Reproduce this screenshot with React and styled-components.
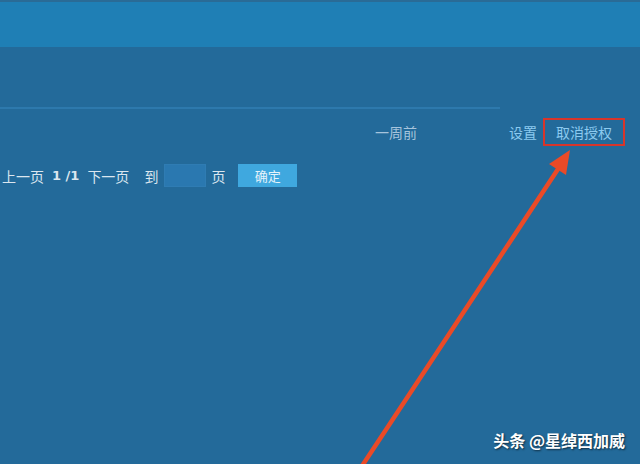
import React from 'react'
import styled, { createGlobalStyle } from 'styled-components'

const GlobalStyle = createGlobalStyle`
  html, body {
    margin: 0;
    padding: 0;
    background: #236a9a;
  }
  body {
    font-family: "Noto Sans CJK SC", "Liberation Sans", sans-serif;
  }
`

const Page = styled.div`
  position: relative;
  width: 640px;
  height: 464px;
  overflow: hidden;
  background: #236a9a;
`

const Header = styled.div`
  height: 47px;
  background: #1f7fb5;
  border-top: 2px solid #2a6b96;
  box-sizing: border-box;
`

const Content = styled.div`
  display: flex;
  flex-direction: column;
  padding-top: 60px;
`

const Divider = styled.div`
  width: 500px;
  height: 2px;
  background: #2d79ad;
`

const Row = styled.div`
  display: flex;
  align-items: center;
  height: 30px;
  margin-top: 8px;
  padding-left: 375px;
  padding-right: 15px;
`

const Time = styled.span`
  font-size: 14px;
  color: #a6c4dc;
`

const Actions = styled.div`
  display: flex;
  align-items: center;
  margin-left: auto;
  gap: 4px;
`

const Link = styled.a`
  font-size: 14px;
  color: #8ccaf0;
  text-decoration: none;
  padding: 2px ${p => (p.$boxed ? '11px' : '0')};
  border: 2px solid ${p => (p.$boxed ? '#d7352b' : 'transparent')};
  line-height: 20px;
`

const Pager = styled.div`
  display: flex;
  align-items: center;
  gap: 8px;
  margin-top: 17px;
  padding-left: 2px;
  font-size: 14px;
  color: #dbe6ef;
`

const Label = styled.span`
  margin-left: ${p => p.$shift || 0}px;
`

const Count = styled.b`
  font-family: "DejaVu Sans", sans-serif;
  font-size: 13px;
`

const PageInput = styled.input`
  width: 42px;
  height: 23px;
  box-sizing: border-box;
  margin-left: -2px;
  background: #2a78b0;
  border: 1px solid #2f7cb3;
  outline: none;
  padding: 0;
`

const GoButton = styled.button`
  width: 59px;
  height: 23px;
  margin-left: 5px;
  border: none;
  background: #3fa8df;
  color: #e6f3fb;
  font-family: inherit;
  font-size: 13px;
  padding: 0;
  cursor: pointer;
`

const Pointer = styled.svg`
  position: absolute;
  left: 0;
  top: 0;
  pointer-events: none;
`

const Watermark = styled.div`
  position: absolute;
  right: 15px;
  bottom: 12px;
  font-size: 16px;
  font-weight: 700;
  color: #ffffff;
  text-shadow: 1px 1px 2px rgba(0, 0, 0, 0.6);
`

export default function App() {
  return (
    <Page>
      <GlobalStyle />
      <Header />
      <Content>
        <Divider />
        <Row>
          <Time>一周前</Time>
          <Actions>
            <Link href="#">设置</Link>
            <Link href="#" $boxed>取消授权</Link>
          </Actions>
        </Row>
        <Pager>
          <Label>上一页</Label>
          <Count>1 /1</Count>
          <Label>下一页</Label>
          <Label $shift={7}>到</Label>
          <PageInput />
          <Label $shift={-3}>页</Label>
          <GoButton>确定</GoButton>
        </Pager>
      </Content>
      <Pointer width="640" height="464" viewBox="0 0 640 464">
        <line x1="362" y1="466" x2="562" y2="163" stroke="#ea4a27" strokeWidth="4.5" strokeLinecap="round" />
        <polygon points="570,150 566,175 549,164" fill="#ea4a27" />
      </Pointer>
      <Watermark>头条 @星绰西加威</Watermark>
    </Page>
  )
}
